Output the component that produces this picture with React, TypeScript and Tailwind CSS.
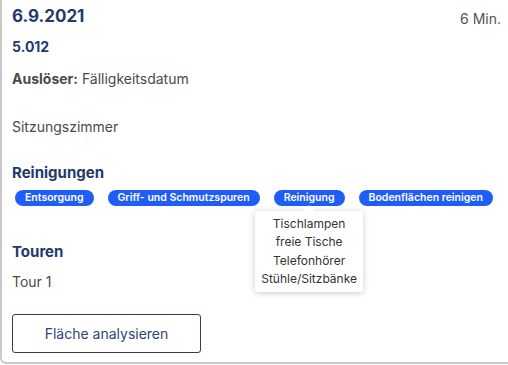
const chips = ["Entsorgung", "Griff- und Schmutzspuren", "Reinigung", "Bodenflächen reinigen"];
const tooltipItems = ["Tischlampen", "freie Tische", "Telefonhörer", "Stühle/Sitzbänke"];

export default function App() {
  return (
    <div className="w-[508px] h-[365px] bg-white overflow-hidden font-['Inter',sans-serif]">
      <div className="h-[364px] border-l-2 border-b-2 border-[#c9c9c9] rounded-bl-md pl-[10px] pr-[7px] pt-[4px]">
        <div className="flex items-start justify-between">
          <h1 className="text-[17px] leading-[24px] font-bold text-[#223a6c]">6.9.2021</h1>
          <span className="text-[14px] leading-[24px] text-[#555] mt-[3px]">6 Min.</span>
        </div>
        <div className="mt-[6px] text-[14px] leading-[20px] font-bold text-[#223a6c]">5.012</div>
        <p className="mt-[12px] text-[14px] leading-[20px] text-[#4a4a4a]">
          <span className="font-bold">Auslöser:</span> Fälligkeitsdatum
        </p>
        <p className="mt-[28px] text-[14px] leading-[20px] text-[#4a4a4a]">Sitzungszimmer</p>

        <h2 className="mt-[26px] text-[15px] leading-[20px] font-bold text-[#223a6c]">Reinigungen</h2>
        <div className="mt-[7px] pl-[3px] flex gap-[14px]">
          {chips.map((c) => (
            <div key={c} className="relative">
              <span className="block h-[16px] px-[10px] rounded-full bg-[#1f5ef6] text-white text-[10.5px] leading-[16px] font-semibold whitespace-nowrap">
                {c}
              </span>
              {c === "Reinigung" && (
                <div className="absolute left-1/2 -translate-x-1/2 top-[21px] z-10 w-[108px] bg-white rounded-[3px] shadow-[0_1px_6px_rgba(0,0,0,0.22)] py-[4px] text-center text-[12px] leading-[18.3px] text-[#333]">
                  <div className="absolute left-[50px] top-[-4px] w-[8px] h-[8px] bg-white rotate-45" />
                  {tooltipItems.map((t) => (
                    <div key={t} className="relative">{t}</div>
                  ))}
                </div>
              )}
            </div>
          ))}
        </div>

        <h2 className="mt-[36px] text-[15px] leading-[20px] font-bold text-[#223a6c]">Touren</h2>
        <p className="mt-[10px] text-[14px] leading-[20px] text-[#4a4a4a]">Tour 1</p>

        <button className="mt-[22px] w-[189px] h-[39px] border border-[#2a3f6e] rounded-[3px] text-[14px] text-[#2e4576] bg-white">
          Fläche analysieren
        </button>
      </div>
    </div>
  );
}
